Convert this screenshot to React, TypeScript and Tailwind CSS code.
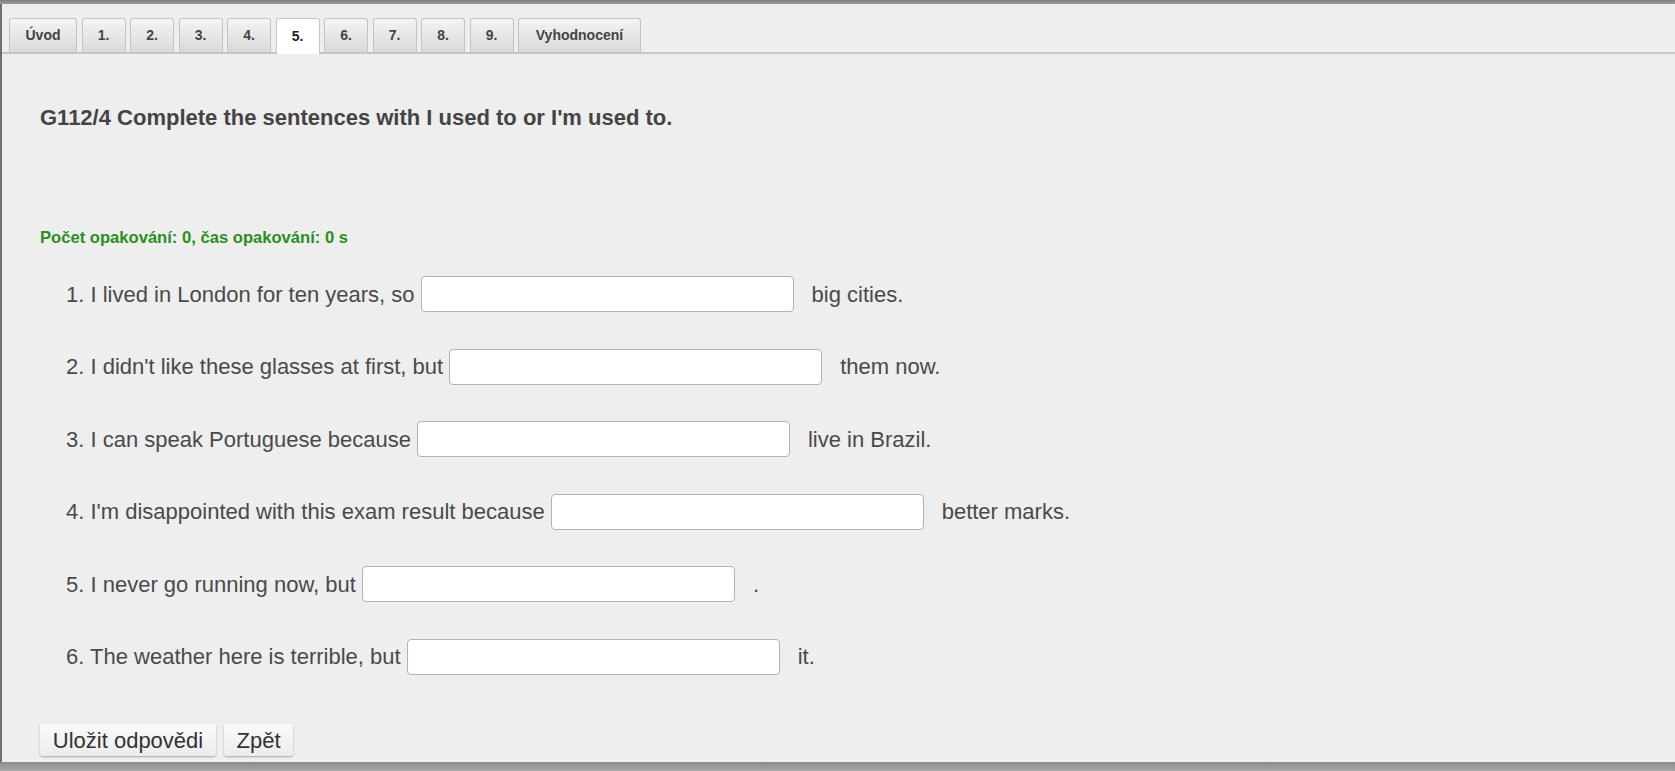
const TABS = ["Úvod", "1.", "2.", "3.", "4.", "5.", "6.", "7.", "8.", "9.", "Vyhodnocení"];

const ROWS: { before: string; after: string }[] = [
  { before: "1. I lived in London for ten years, so", after: "big cities." },
  { before: "2. I didn't like these glasses at first, but", after: "them now." },
  { before: "3. I can speak Portuguese because", after: "live in Brazil." },
  { before: "4. I'm disappointed with this exam result because", after: "better marks." },
  { before: "5. I never go running now, but", after: "." },
  { before: "6. The weather here is terrible, but", after: "it." },
];

function Tab({ label, active }: { label: string; active: boolean }) {
  const width = label === "Úvod" ? "w-[68px]" : label === "Vyhodnocení" ? "w-[123px]" : "w-[44px]";
  return (
    <div
      className={`${width} flex items-center justify-center rounded-t-[3px] border border-b-0 text-[14px] font-bold ${
        active
          ? "h-[36px] border-[#c8c8c8] bg-white text-[#222] -mb-[2px] relative z-10"
          : "h-[34px] border-[#c4c4c4] bg-gradient-to-b from-[#f4f4f4] to-[#d9d9d9] text-[#444]"
      }`}
    >
      {label}
    </div>
  );
}

export default function App() {
  return (
    <div className="flex h-[771px] w-full flex-col bg-[#9a9a9a] font-['Liberation_Sans',Arial,sans-serif]">
      {/* top strip */}
      <div className="h-[4px] bg-gradient-to-b from-[#7e7e7e] to-[#a0a0a0]" />

      <div className="flex flex-1 flex-col border-l-2 border-[#6f6f6f] bg-[#eeeeee] shadow-[0_2px_4px_rgba(0,0,0,0.25)]">
        {/* tabs */}
        <div className="flex items-end gap-[4.5px] border-b-2 border-[#c6c6c6] pl-[7px] pt-[14px]">
          {TABS.map((t) => (
            <Tab key={t} label={t} active={t === "5."} />
          ))}
        </div>

        <div className="flex flex-1 flex-col pl-[38px]">
          <h1 className="mt-[51px] text-[22px] leading-[26px] font-bold text-[#444]">
            G112/4 Complete the sentences with I used to or I'm used to.
          </h1>

          <p className="mt-[97px] text-[16.6px] leading-[20px] font-bold text-[#2a8f1c]">
            Počet opakování: 0, čas opakování: 0 s
          </p>

          <div className="mt-[28px] flex flex-col gap-[36.6px] pl-[26px] text-[22px] text-[#4a4a4a]">
            {ROWS.map((r) => (
              <div key={r.before} className="flex h-[36px] items-center">
                <span className="whitespace-pre">{r.before}</span>
                <input
                  type="text"
                  className="ml-[6px] h-[36px] w-[373px] rounded-[4px] border border-[#b3b3b3] bg-white outline-none"
                />
                <span className="ml-[18px] whitespace-pre">{r.after}</span>
              </div>
            ))}
          </div>

          <div className="mt-auto mb-[6px] flex gap-[8px]">
            <button className="h-[32px] w-[176px] rounded-[3px] bg-gradient-to-b from-[#fafafa] to-[#ececec] text-[22px] text-[#333] shadow-[0_1px_2px_rgba(0,0,0,0.3)]">
              Uložit odpovědi
            </button>
            <button className="h-[32px] w-[69px] rounded-[3px] bg-gradient-to-b from-[#fafafa] to-[#ececec] text-[22px] text-[#333] shadow-[0_1px_2px_rgba(0,0,0,0.3)]">
              Zpět
            </button>
          </div>
        </div>
      </div>

      {/* bottom strip */}
      <div className="h-[9px] bg-gradient-to-b from-[#8c8c8c] to-[#a8a8a8]" />
    </div>
  );
}
